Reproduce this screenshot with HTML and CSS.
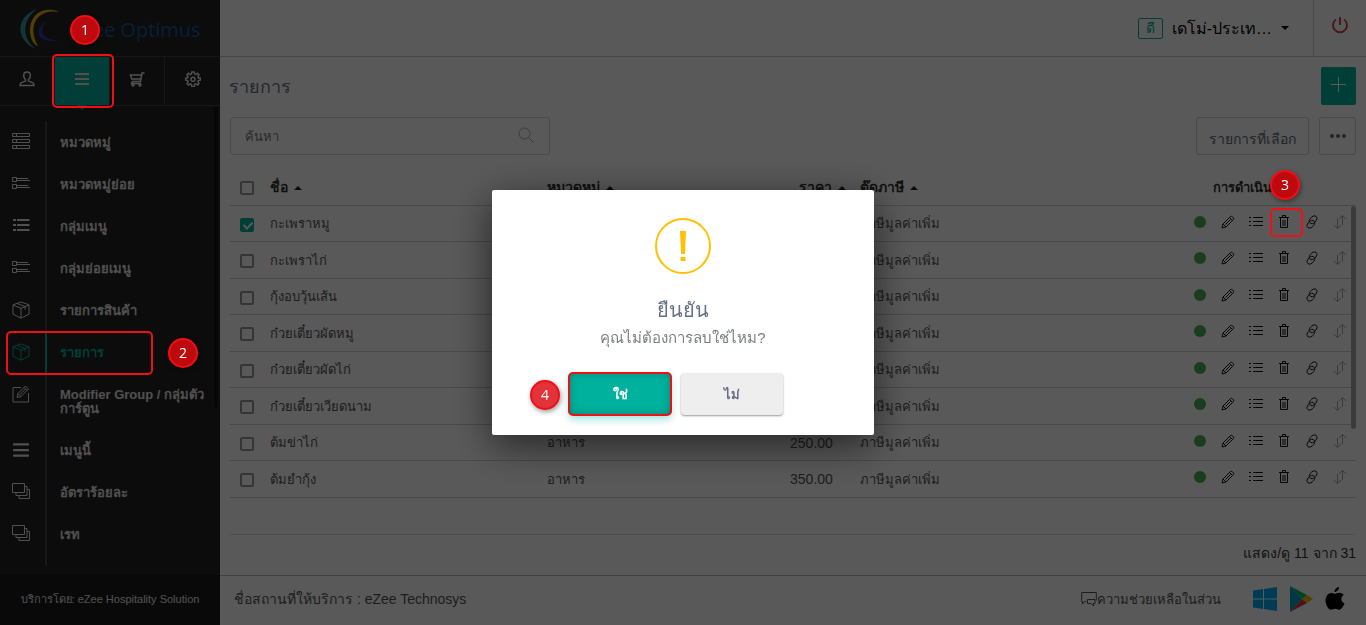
FILE: index.html
```html
<!DOCTYPE html>
<html lang="th">
<head>
  <meta charset="UTF-8" />
  <meta name="viewport" content="width=device-width, initial-scale=1" />
  <title>eZee Optimus - รายการ</title>
  <link rel="stylesheet" href="styles.css">
</head>
<body>

  <!-- Icon sprite -->
  <svg class="sprite" aria-hidden="true">
    <symbol id="i-user" viewBox="0 0 16 16"><path d="M8 1C5.8 1 4.7 2.700 4.700 4.700c0 1.800.8 3 1.800 3.900v1.500L2.500 11.600C1.300 12.100 1 13 1 14.500h14c0-1.500-.3-2.400-1.500-2.900l-4-1.500V8.600c1-.9 1.800-2.100 1.800-3.900C11.300 2.700 10.200 1 8 1z"/></symbol>
    <symbol id="i-bars" viewBox="0 0 16 16"><path d="M1 3h14M1 8h14M1 13h14"/></symbol>
    <symbol id="i-cart" viewBox="0 0 16 16"><path d="M15.500 2h-2.500l-1.500 8.500H3M12.500 4H1.500l1.300 4h9M3.500 10.500L2.500 12.500h9.500"/><circle cx="4" cy="14" r="1"/><circle cx="11" cy="14" r="1"/></symbol>
    <symbol id="i-gear" viewBox="0 0 16 16"><path d="M6.800 1h2.400l.4 2 1.200.5 1.700-1.200 1.500 1.500-1.100 1.800.5 1.200 2 .4v2l-2 .4-.5 1.200 1.100 1.800-1.500 1.500-1.700-1.200-1.200.5-.4 2H6.800l-.4-2-1.200-.5-1.700 1.200L2 12.600l1.100-1.800-.5-1.200-2-.4v-2l2-.4.5-1.200L2 3.800l1.500-1.500 1.700 1.200L6.400 3z"/><circle cx="8" cy="8.200" r="2"/></symbol>
    <symbol id="i-server" viewBox="0 0 18 16"><path d="M.5.5h4v3h-4zM4.500.5h13v3h-13zM.5 6.500h4v3h-4zM4.500 6.500h13v3h-13zM.5 12.500h4v3h-4zM4.500 12.500h13v3h-13z"/></symbol>
    <symbol id="i-sublist" viewBox="0 0 18 16"><path d="M.5 2.500h4v4h-4zM.5 9.500h4v4h-4zM5 3.500h11M5 5.500h13M5 10.500h11M5 12.500h13"/></symbol>
    <symbol id="i-list" viewBox="0 0 18 16"><path d="M1 3h3M5 3h12.500M1 8h3M5 8h12.500M1 13h3M5 13h12.500"/></symbol>
    <symbol id="i-box" viewBox="0 0 18 18"><path d="M9 1l8 2.800v9.400l-8 4-8-4V3.800zM1 4l8 3.300L17 4M9 7.300v9.900M5 2.400l8 3.200v3"/></symbol>
    <symbol id="i-edit" viewBox="0 0 18 18"><path d="M9 2.500H1v14.500h15.500v-9M5 12.500l1-4 7.500-7.500 3 3-7.500 7.500zM12 2.500l3 3M6 8.500l3 3M8 9.500l5.500-5.500"/></symbol>
    <symbol id="i-stack" viewBox="0 0 18 16"><path d="M.5.500h12v9h-12zM12.500 3.500h2.500v9H4v-3M15 6.500h2.500v9H7v-3"/></symbol>
    <symbol id="i-search" viewBox="0 0 16 16"><circle cx="6.500" cy="6.500" r="5.500"/><path d="M10.500 10.500l5 5"/></symbol>
    <symbol id="i-power" viewBox="0 0 18 18"><path d="M5 3.500a7 7 0 1 0 8 0M9 1v8"/></symbol>
    <symbol id="i-pencil" viewBox="0 0 14 14"><path d="M1 13l1-4 7.500-7.500c1-1 4 1.500 3 3L5 12zM8.500 2.500l3 3M2 9l3 3M4.500 9.500l5-5"/></symbol>
    <symbol id="i-rows" viewBox="0 0 14 12"><path d="M0 1.500h2M4 1.500h10M0 5.500h2M4 5.500h10M0 9.500h2M4 9.500h10"/></symbol>
    <symbol id="i-trash" viewBox="0 0 10 14"><path d="M1.500 3v9.500h7V3M0 2.500h10M3.500 2V.500h3V2M4 5v6M6 5v6"/></symbol>
    <symbol id="i-link" viewBox="0 0 12 14"><path d="M5 8.500C2.500 7.500 3 5 4.500 3.200S8.300.2 10 1.300c1.700 1.300 1 3.400-.3 5S6.800 9.200 5 8.500M7 5.500c2.500 1 2 3.500.5 5.300S3.700 13.800 2 12.700C.3 11.400 1 9.300 2.300 7.700S5.200 4.800 7 5.500"/></symbol>
    <symbol id="i-sort" viewBox="0 0 14 14"><path d="M4.500 4v9.500M.8 10l3.700 3.500L8 10M9.500 10V.500M6 4L9.500.500 13.200 4"/></symbol>
    <symbol id="i-chat" viewBox="0 0 16 15"><path d="M5 9.500H3.500L1.500 12V9.500H.7v-9h14.600v8M6.500 7.500h7.500v4h-1.500V14l-2.500-2.500H6.500z"/></symbol>
    <symbol id="i-caret" viewBox="0 0 8 4"><path d="M0 4l4-4 4 4z"/></symbol>
  </svg>

  <aside class="sidebar">
    <a class="logo" href="#">
      <svg width="42" height="42" viewBox="0 0 42 42" aria-hidden="true">
        <path d="M17 1C-5 9-5 32 16 41 1 30 2 12 17 1z" fill="#319ca0"/>
        <path d="M39 4C19 0 6 16 18 38 10 36 5 15 18 5 25 1 33 1 39 4z" fill="#ecb800"/>
        <path d="M26 13C13 21 17 37 39 32 24 32 18 26 26 13z" fill="#243f9c"/>
      </svg>
      <span>eZee Optimus</span>
    </a>
    <nav class="tabs">
      <a href="#" aria-label="ผู้ใช้"><svg class="icon" width="16" height="16"><use href="#i-user"/></svg></a>
      <a class="active" href="#" aria-label="เมนู"><svg class="icon bold" width="16" height="16"><use href="#i-bars"/></svg></a>
      <a href="#" aria-label="คำสั่งซื้อ"><svg class="icon" width="16" height="16"><use href="#i-cart"/></svg></a>
      <a href="#" aria-label="ตั้งค่า"><svg class="icon" width="16" height="16"><use href="#i-gear"/></svg></a>
    </nav>
    <ul class="menu">
      <li><a href="#"><svg class="icon" width="18" height="16"><use href="#i-server"/></svg><span>หมวดหมู่</span></a></li>
      <li><a href="#"><svg class="icon" width="18" height="16"><use href="#i-sublist"/></svg><span>หมวดหมู่ย่อย</span></a></li>
      <li><a href="#"><svg class="icon bold" width="18" height="16"><use href="#i-list"/></svg><span>กลุ่มเมนู</span></a></li>
      <li><a href="#"><svg class="icon" width="18" height="16"><use href="#i-sublist"/></svg><span>กลุ่มย่อยเมนู</span></a></li>
      <li><a href="#"><svg class="icon" width="18" height="18"><use href="#i-box"/></svg><span>รายการสินค้า</span></a></li>
      <li><a class="active" href="#"><svg class="icon" width="18" height="18"><use href="#i-box"/></svg><span>รายการ</span></a></li>
      <li><a href="#"><svg class="icon" width="18" height="18"><use href="#i-edit"/></svg><span>Modifier Group / กลุ่มตัวการ์ตูน</span></a></li>
      <li><a href="#"><svg class="icon bold" width="18" height="18"><use href="#i-bars"/></svg><span>เมนูนี้</span></a></li>
      <li><a href="#"><svg class="icon" width="18" height="16"><use href="#i-stack"/></svg><span>อัตราร้อยละ</span></a></li>
      <li><a href="#"><svg class="icon" width="18" height="16"><use href="#i-stack"/></svg><span>เรท</span></a></li>
    </ul>
    <div class="powered">บริการโดย: eZee Hospitality Solution</div>
    <div class="menu-thumb"></div>
  </aside>

  <div class="page">
    <header class="topbar">
      <button class="account" type="button">
        <span class="avatar">ดี</span>
        <span>เดโม่-ประเท…</span>
        <svg class="caret down" width="8" height="4"><use href="#i-caret"/></svg>
      </button>
      <button class="power" type="button" aria-label="ออกจากระบบ"><svg class="icon bold" width="18" height="18"><use href="#i-power"/></svg></button>
    </header>

    <main class="content">
      <div class="title-row">
        <h1>รายการ</h1>
        <button class="add" type="button" aria-label="เพิ่ม"><svg class="icon" width="15" height="15" viewBox="0 0 15 15"><path d="M7.500 0v15M0 7.500h15"/></svg></button>
      </div>
      <div class="tools">
        <div class="search">
          <input type="text" placeholder="ค้นหา" aria-label="ค้นหา">
          <svg class="icon" width="16" height="16"><use href="#i-search"/></svg>
        </div>
        <button class="btn" type="button">รายการที่เลือก</button>
        <button class="btn more" type="button" aria-label="เพิ่มเติม"><i></i><i></i><i></i></button>
      </div>

      <div class="table-box">
        <table>
          <thead>
            <tr>
              <th class="c-check"><input type="checkbox" aria-label="เลือกทั้งหมด"></th>
              <th class="c-name">ชื่อ <svg class="caret" width="8" height="4"><use href="#i-caret"/></svg></th>
              <th class="c-cat">หมวดหมู่ <svg class="caret" width="8" height="4"><use href="#i-caret"/></svg></th>
              <th class="c-price">ราคา <svg class="caret" width="8" height="4"><use href="#i-caret"/></svg></th>
              <th class="c-tax">ต๊ดภาษี <svg class="caret" width="8" height="4"><use href="#i-caret"/></svg></th>
              <th class="c-actions">การดำเนินการ</th>
            </tr>
          </thead>
          <tbody id="rows"></tbody>
        </table>
        <div class="table-thumb"></div>
      </div>
      <p class="count">แสดง/ดู 11 จาก 31</p>
    </main>

    <footer class="footer">
      <span>ชื่อสถานที่ให้บริการ : eZee Technosys</span>
      <a class="help" href="#"><svg class="icon" width="16" height="15"><use href="#i-chat"/></svg>ความช่วยเหลือในส่วน</a>
      <a href="#" aria-label="Windows"><svg width="24" height="24" viewBox="0 0 24 24" fill="#00adef"><path d="M0 3.500L10 2v9.500H0zM11 1.900L24 0v11.500H11zM0 12.500h10V22L0 20.600zM11 12.500h13V24l-13-1.900z"/></svg></a>
      <a href="#" aria-label="Google Play"><svg width="24" height="26" viewBox="0 0 24 26"><path d="M1 0v26l12-13z" fill="#00a0c8"/><path d="M1 0l17 9-5 4z" fill="#00c060"/><path d="M1 26l17-9-5-4z" fill="#e0304a"/><path d="M18 9l6 4-6 4-5-4z" fill="#f0b800"/></svg></a>
      <a href="#" aria-label="Apple"><svg width="20" height="24" viewBox="0 0 20 24"><path d="M14 0c.2 2.500-2 5-4.500 5C9.300 2.700 11.500.3 14 0zM10 6.800c1 0 2.500-1.300 4.700-1.100 1.700.1 3.100.9 4 2.200-3.400 2.200-2.900 6.900.8 8.300-.8 2.300-3 6.500-5.300 6.600-1.600 0-2.100-1-4-1s-2.500 1-4 1C3.400 22.900.5 17.900.5 13.500c0-4.600 2.900-7.600 5.900-7.600 1.600 0 2.600.9 3.600.9z"/></svg></a>
    </footer>
  </div>

  <!-- Confirm dialog -->
  <div class="backdrop">
    <div class="dialog" role="dialog" aria-labelledby="dlg-title" aria-describedby="dlg-text">
      <div class="alert-icon">
        <svg width="8" height="32" viewBox="0 0 8 32" aria-hidden="true"><path d="M1 1h6l-1 23H2zM1.500 27h5v4h-5z"/></svg>
      </div>
      <h2 id="dlg-title">ยืนยัน</h2>
      <p id="dlg-text">คุณไม่ต้องการลบใช่ไหม?</p>
      <div class="dialog-buttons">
        <button class="yes" type="button">ใช่</button>
        <button class="no" type="button">ไม่</button>
      </div>
      <span class="step step-4">4</span>
    </div>
  </div>

  <!-- Guide marks -->
  <span class="step step-1">1</span>
  <span class="mark mark-1"></span>
  <span class="step step-2">2</span>
  <span class="mark mark-2"></span>
  <span class="step step-3">3</span>
  <span class="mark mark-3"></span>

  <script>
    const items = [
      ['กะเพราหมู', '200.00', true],
      ['กะเพราไก่', '200.00'],
      ['กุ้งอบวุ้นเส้น', '350.00'],
      ['ก๋วยเตี๋ยวผัดหมู', '200.00'],
      ['ก๋วยเตี๋ยวผัดไก่', '200.00'],
      ['ก๋วยเตี๋ยวเวียดนาม', '200.00'],
      ['ต้มข่าไก่', '250.00'],
      ['ต้มยำกุ้ง', '350.00']
    ];
    const actions = [
      ['pencil', 'แก้ไข', 14, 14],
      ['rows', 'รายละเอียด', 14, 12],
      ['trash', 'ลบ', 10, 14],
      ['link', 'ลิงก์', 12, 14],
      ['sort', 'เรียง', 14, 14]
    ];
    const buttons = actions.map(([id, label, w, h]) =>
      `<button class="${id}" type="button" aria-label="${label}"><svg class="icon" width="${w}" height="${h}"><use href="#i-${id}"/></svg></button>`
    ).join('');

    document.getElementById('rows').innerHTML = items.map(([name, price, checked]) => `
      <tr>
        <td><input type="checkbox" aria-label="${name}" ${checked ? 'checked' : ''}></td>
        <td>${name}</td>
        <td>อาหาร</td>
        <td class="c-price">${price}</td>
        <td class="c-tax">ภาษีมูลค่าเพิ่ม</td>
        <td><div class="actions"><span class="dot"></span>${buttons}</div></td>
      </tr>`).join('');
  </script>
</body>
</html>
```
FILE: styles.css
```css
* {
  box-sizing: border-box;
}

body {
  margin: 0;
  min-height: 100vh;
  display: grid;
  grid-template-columns: 220px 1fr;
  position: relative;
  font-family: "Liberation Sans", Arial, sans-serif;
  font-size: 14px;
  color: #555;
  background: #fff;
}

a {
  color: inherit;
  text-decoration: none;
}

button {
  font: inherit;
  color: inherit;
  background: none;
  border: 0;
  padding: 0;
}

.sprite {
  position: absolute;
  width: 0;
  height: 0;
}

.icon {
  fill: none;
  stroke: currentColor;
  flex: none;
}

.icon.bold {
  stroke-width: 2;
}

.caret {
  fill: #222;
  margin-left: 2px;
  vertical-align: middle;
}

.caret.down {
  transform: rotate(180deg);
  fill: #000;
}

/* Sidebar */
.sidebar {
  position: relative;
  display: flex;
  flex-direction: column;
  background: #242424;
  color: #e4e4e4;
}

.logo {
  display: flex;
  align-items: center;
  gap: 8px;
  height: 56px;
  padding: 2px 0 0 20px;
  font-family: "Open Sans", sans-serif;
  font-size: 20px;
  color: #155a9e;
}

.tabs {
  display: grid;
  grid-template-columns: repeat(4, 1fr);
  height: 50px;
  border-top: 1px solid #444;
  border-bottom: 1px solid #444;
}

.tabs a {
  display: flex;
  align-items: center;
  justify-content: center;
  padding-bottom: 4px;
  border-right: 1px solid #444;
}

.tabs a:last-child {
  border-right: 0;
}

.tabs .icon {
  stroke-width: 1.5;
}

.tabs .active {
  position: relative;
  background: #00b19d;
}

.tabs .active .icon {
  stroke-width: 2;
}

.tabs .active::after {
  content: "";
  position: absolute;
  top: 100%;
  left: 50%;
  margin-left: -5px;
  border: 5px solid transparent;
  border-top-color: #00b19d;
}

.menu {
  list-style: none;
  margin: 15px 0 0;
  padding: 0;
  flex: 1;
}

.menu a {
  display: grid;
  grid-template-columns: 33px 1fr;
  padding: 0 12px;
  font-size: 13px;
  line-height: 14px;
  font-weight: 700;
}

.menu .icon {
  margin-top: 12px;
}

.menu span {
  padding: 15px 0 13px 13px;
  border-left: 2px solid #444;
}

.menu .active {
  color: #00b19d;
}

.menu .active span {
  border-color: #00b19d;
}

.menu li:last-child span {
  padding-bottom: 24px;
}

.powered {
  height: 50px;
  line-height: 48px;
  text-align: center;
  font-size: 11px;
  background: #1c1c1c;
}

.menu-thumb {
  position: absolute;
  top: 107px;
  right: 2px;
  width: 4px;
  height: 300px;
  background: #161616;
}

/* Page */
.page {
  display: flex;
  flex-direction: column;
  min-width: 0;
}

.topbar {
  display: flex;
  justify-content: flex-end;
  height: 57px;
  border-bottom: 1px solid #c8c8d0;
}

.account {
  display: flex;
  align-items: center;
  gap: 7px;
  padding-right: 24px;
  font-size: 16px;
  color: #000;
}

.avatar {
  width: 25px;
  height: 21px;
  margin-right: 2px;
  border: 1px solid #00b19d;
  border-radius: 2px;
  font-size: 14px;
  line-height: 18px;
  color: #00b19d;
}

.power {
  width: 53px;
  padding-bottom: 4px;
  border-left: 1px solid #d0d0d8;
  color: #c9494c;
}

.content {
  flex: 1;
  padding: 10px 10px 0 9px;
}

.title-row {
  display: flex;
  align-items: center;
  justify-content: space-between;
}

h1 {
  margin: 0;
  font-size: 18px;
  font-weight: 400;
  color: #667085;
}

.add {
  width: 35px;
  height: 38px;
  border-radius: 2px;
  background: #00b19d;
  color: #fff;
}

.tools {
  display: flex;
  gap: 10px;
  margin-top: 12px;
}

.search {
  position: relative;
  width: 320px;
  margin: 0 auto 0 1px;
}

.search input {
  width: 100%;
  height: 38px;
  padding: 0 14px;
  border: 1px solid #d4d4da;
  border-radius: 3px;
  font-family: inherit;
  font-size: 13px;
  background: none;
}

.search input::placeholder {
  color: #777;
}

.search .icon {
  position: absolute;
  top: 10px;
  right: 16px;
  color: #aaa;
}

.btn {
  height: 38px;
  padding: 6px 12px 0;
  border: 1px solid #d4d4da;
  border-radius: 3px;
  color: #606875;
}

.more {
  display: flex;
  align-items: center;
  justify-content: center;
  gap: 2px;
  width: 37px;
  padding: 0;
}

.more i {
  width: 4px;
  height: 4px;
  border-radius: 50%;
  background: #606875;
}

/* Items table */
.table-box {
  position: relative;
  min-height: 366px;
  margin-top: 14px;
  border-bottom: 1px solid #dcdcdc;
  border-radius: 3px;
}

table {
  width: 100%;
  table-layout: fixed;
  border-collapse: separate;
  border-spacing: 0;
}

th,
td {
  padding: 0;
  text-align: left;
  white-space: nowrap;
  border-bottom: 1px solid #d2d2d2;
}

th {
  height: 37px;
  font-size: 14px;
  font-weight: 700;
  color: #333;
}

td {
  height: 36px;
  font-size: 13px;
}

tbody tr:nth-child(even) td {
  height: 37px;
}

.c-check { width: 41px; }
.c-name { width: 277px; }
.c-cat { width: 18%; }
.c-price { width: 96px; text-align: right; }
.c-tax { padding-left: 14px; }
.c-actions { width: 166px; padding-left: 23px; font-size: 13px; }

td.c-price {
  padding-right: 13px;
  font-size: 14px;
}

input[type="checkbox"] {
  appearance: none;
  display: block;
  width: 14px;
  height: 14px;
  margin: 2px 0 0 11px;
  border: 2px solid #999;
  border-radius: 2px;
}

input[type="checkbox"]:checked {
  border-color: #00b19d;
  background: #00b19d;
}

input[type="checkbox"]:checked::after {
  content: "";
  display: block;
  width: 4px;
  height: 7px;
  margin: 0 0 0 3px;
  border: solid #fff;
  border-width: 0 2px 2px 0;
  transform: rotate(45deg);
}

.actions {
  display: grid;
  grid-template-columns: repeat(6, 28px);
  place-items: center;
  padding-bottom: 4px;
  margin-left: -4px;
}

.actions button {
  display: flex;
  color: #111;
}

.actions .sort {
  color: #aaa;
}

.dot {
  width: 12px;
  height: 12px;
  border-radius: 50%;
  background: #4caf50;
}

.table-thumb {
  position: absolute;
  top: 37px;
  right: 0;
  width: 5px;
  height: 223px;
  border-radius: 3px;
  background: #aaa;
}

.count {
  margin: 0;
  padding: 9px 0 12px;
  text-align: right;
  line-height: 18px;
  color: #333;
}

.footer {
  display: flex;
  align-items: center;
  gap: 12px;
  height: 50px;
  padding: 0 21px 3px 14px;
  border-top: 1px solid #bbb;
}

.footer a {
  display: flex;
  align-items: center;
}

.footer .help {
  margin-left: auto;
  margin-right: 20px;
  font-size: 13px;
}

/* Confirm dialog */
.backdrop {
  position: fixed;
  inset: 0;
  display: flex;
  align-items: center;
  justify-content: center;
  background: rgba(0, 0, 0, .65);
}

.dialog {
  position: relative;
  width: 382px;
  padding: 28px 0 20px;
  border-radius: 2px;
  background: #fff;
  box-shadow: 0 10px 40px rgba(0, 0, 0, .6);
  text-align: center;
}

.alert-icon {
  display: flex;
  align-items: center;
  justify-content: center;
  width: 56px;
  height: 56px;
  margin: 0 auto 22px;
  border: 2px solid #ffc107;
  border-radius: 50%;
  fill: #ffc107;
}

.dialog h2 {
  margin: 0;
  font-size: 20px;
  line-height: 28px;
  font-weight: 400;
  color: #667085;
}

.dialog p {
  margin: 0 0 22px;
  font-size: 15px;
  line-height: 27px;
  color: #7c7f87;
}

.dialog-buttons {
  display: flex;
  justify-content: center;
  gap: 10px;
  padding-right: 14px;
}

.dialog-buttons button {
  width: 102px;
  height: 42px;
  border-radius: 4px;
  font-size: 13px;
  font-weight: 700;
}

.dialog-buttons .yes {
  background: #00b19d;
  color: #fff;
  outline: 2px solid #f00f14;
  outline-offset: -1px;
  box-shadow: inset 0 0 8px rgba(0, 0, 0, .3), 0 4px 8px rgba(0, 177, 157, .4);
}

.dialog-buttons .no {
  background: #eee;
  color: #667085;
  box-shadow: 0 1px 2px rgba(0, 0, 0, .4);
}

/* Guide marks */
.step {
  position: absolute;
  width: 30px;
  height: 30px;
  border: 2px solid #f00f14;
  border-radius: 50%;
  background: #be0a0e;
  color: #fff;
  font-family: "Open Sans", sans-serif;
  font-size: 14px;
  line-height: 26px;
  text-align: center;
  box-shadow: 1px 2px 5px rgba(0, 0, 0, .4);
}

.mark {
  position: absolute;
  border: 2px solid #f00f14;
  border-radius: 5px;
}

.step-1 { top: 15px; left: 70px; }
.mark-1 { top: 54px; left: 52px; width: 62px; height: 54px; }
.step-2 { top: 338px; left: 168px; }
.mark-2 { top: 331px; left: 6px; width: 147px; height: 44px; }
.step-3 { top: 170px; right: 66px; }
.mark-3 { top: 208px; right: 63px; width: 33px; height: 29px; }
.step-4 { bottom: 25px; left: 38px; background: #e23338; }
```
